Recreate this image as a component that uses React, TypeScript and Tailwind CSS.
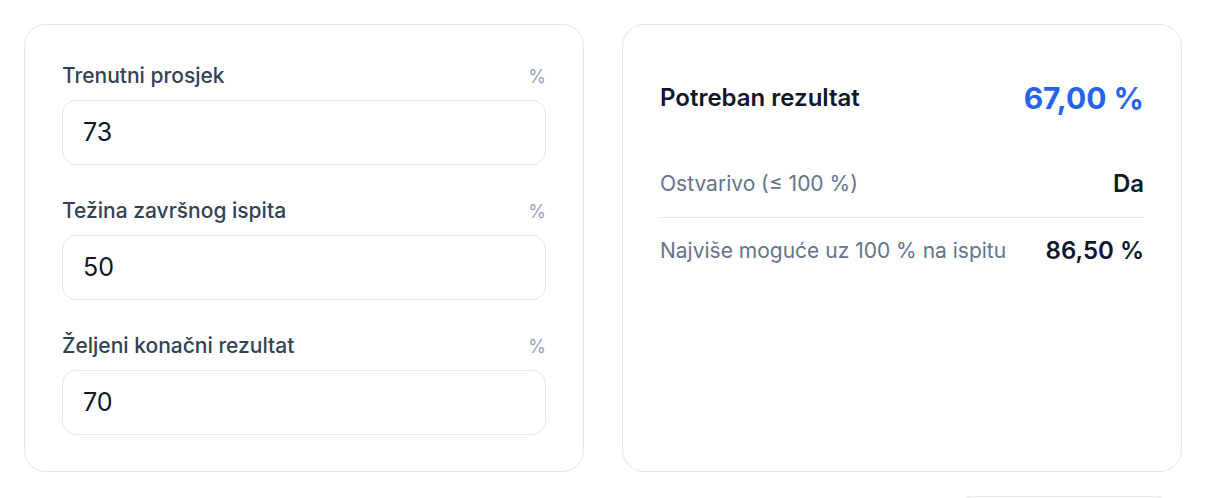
import React from 'react';

const fields = [
  { label: 'Trenutni prosjek', value: '73' },
  { label: 'Težina završnog ispita', value: '50' },
  { label: 'Željeni konačni rezultat', value: '70' },
];

function Field({ label, value }: { label: string; value: string }) {
  return (
    <div className="flex flex-col">
      <div className="flex h-6 items-center justify-between">
        <span className="text-[21px] font-medium text-[#334155]">{label}</span>
        <span className="text-[18px] text-[#94a3b8]">%</span>
      </div>
      <div className="mt-3 flex h-[65px] items-center rounded-[14px] border border-[#e5e7eb] bg-white px-[20px]">
        <span className="text-[25px] text-[#0f172a]">{value}</span>
      </div>
    </div>
  );
}

export default function App() {
  return (
    <div className="min-h-screen bg-white px-6 pt-6 font-['Inter',sans-serif]">
      <div className="grid grid-cols-2 gap-[38px]">
        <div className="flex h-[448px] flex-col gap-[34px] rounded-[22px] border border-[#e5e7eb] px-[37px] pt-[39px] pb-[36px]">
          {fields.map((f) => (
            <Field key={f.label} label={f.label} value={f.value} />
          ))}
        </div>

        <div className="flex h-[448px] flex-col rounded-[22px] border border-[#e5e7eb] px-[37px] pt-[53px]">
          <div className="flex h-10 items-center justify-between">
            <span className="text-[24px] font-semibold text-[#0f172a]">Potreban rezultat</span>
            <span className="text-[30px] font-bold text-[#2563eb]">67,00 %</span>
          </div>
          <div className="mt-[33px] flex items-center justify-between border-b border-[#e5e7eb] py-[19px] leading-7">
            <span className="text-[21px] text-[#64748b]">Ostvarivo (≤ 100 %)</span>
            <span className="text-[24px] font-semibold text-[#0f172a]">Da</span>
          </div>
          <div className="flex items-center justify-between py-[19px] leading-7">
            <span className="text-[21px] text-[#64748b]">Najviše moguće uz 100 % na ispitu</span>
            <span className="text-[24px] font-semibold text-[#0f172a]">86,50 %</span>
          </div>
        </div>
      </div>

      <div className="mt-6 flex justify-end pr-[14px]">
        <div className="h-10 w-[208px] rounded-xl border border-[#e5e7eb]" />
      </div>
    </div>
  );
}
